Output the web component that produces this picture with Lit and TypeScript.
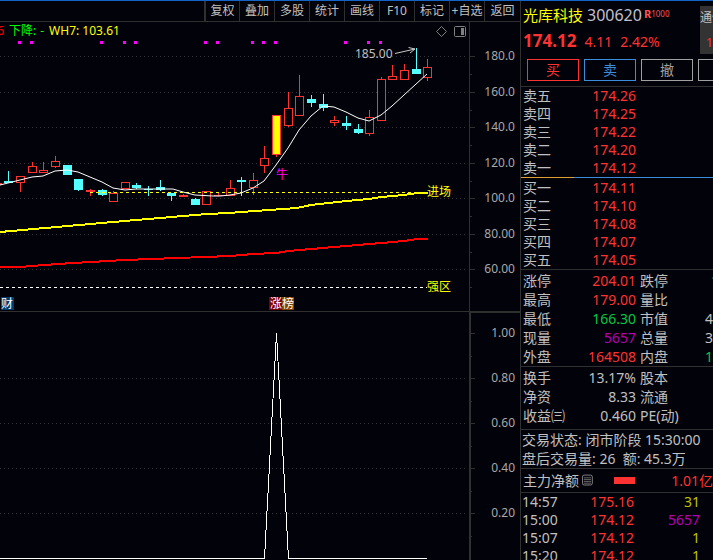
import { LitElement, html, svg, css } from "lit";
import { customElement } from "lit/decorators.js";

type Kind = "up" | "down" | "signal";
// centre x, high, body top, body bottom, low, kind
type Candle = [number, number, number, number, number, Kind];

const CANDLES: Candle[] = [
  [-3, 183, 183, 185, 185, "up"], [8, 171, 181, 183, 183, "down"], [20, 176, 176, 183, 192, "up"],
  [32, 162, 166, 173, 173, "up"], [43, 162, 170, 173, 173, "up"], [55, 156, 161, 167, 168, "up"],
  [67, 165, 165, 175, 175, "down"], [78, 179, 179, 190, 191, "down"], [90, 189, 190, 192, 196, "up"],
  [102, 189, 190, 195, 196, "down"], [113, 191, 193, 202, 202, "up"], [125, 182, 182, 189, 189, "up"],
  [136, 183, 185, 188, 189, "down"], [148, 186, 189, 190, 196, "down"], [160, 180, 187, 190, 191, "down"],
  [171, 193, 193, 196, 201, "down"], [183, 194, 195, 197, 197, "up"], [195, 198, 199, 205, 205, "down"],
  [206, 191, 191, 205, 205, "up"], [218, 192, 195, 196, 196, "up"], [230, 180, 188, 196, 196, "up"],
  [241, 177, 180, 182, 196, "down"], [253, 173, 180, 188, 195, "up"], [264, 146, 158, 166, 173, "up"],
  [276, 115, 115, 155, 157, "signal"], [288, 92, 108, 126, 127, "up"], [299, 75, 96, 116, 116, "up"],
  [311, 95, 99, 103, 107, "down"], [323, 94, 104, 108, 111, "down"], [334, 116, 120, 123, 126, "up"],
  [346, 116, 123, 126, 130, "down"], [358, 124, 129, 133, 134, "down"], [369, 110, 117, 134, 136, "up"],
  [381, 77, 79, 121, 121, "up"], [392, 65, 76, 80, 80, "up"], [404, 64, 70, 80, 80, "up"],
  [416, 48, 69, 74, 74, "down"], [427, 59, 67, 78, 81, "up"],
];

const MARKS = [18, 30, 100, 123, 134, 204, 216, 251, 262, 274, 344, 367, 379];

const MA_LINE =
  "0,185 8,183 20,180 32,177 43,176 55,171 67,170 78,172 90,177 102,182 113,188 125,190 136,189 173,189 183,192 195,195 213,196 220,196 230,195 241,193 253,188 264,181 276,165 288,148 299,130 311,116 323,106 334,107 346,112 358,118 369,121 381,115 392,106 404,95 427,74";
const TREND_LINE =
  "0,232 113,222 195,215 207,214 230,213 241,212 297,208 311,205 346,201 369,199 381,197 404,195 417,193 428,193";
const BASE_LINE =
  "0,267 20,267 57,264 125,260 230,256 253,254 276,253 288,251 334,247 381,243 404,241 417,239 428,239";

const PRICE_AXIS: [number, string][] = [
  [56, "180.0"], [92, "160.0"], [127, "140.0"], [163, "120.0"], [198, "100.0"], [234, "80.00"], [269, "60.00"],
];
const SIGNAL_AXIS: [number, string][] = [
  [333, "1.00"], [378, "0.80"], [423, "0.60"], [468, "0.40"], [513, "0.20"],
];

const TOOLS = ["复权", "叠加", "多股", "统计", "画线", "F10", "标记", "+自选", "返回"];

const ASKS = [["卖五", "174.26"], ["卖四", "174.25"], ["卖三", "174.22"], ["卖二", "174.20"], ["卖一", "174.12"]];
const BIDS = [["买一", "174.11"], ["买二", "174.10"], ["买三", "174.08"], ["买四", "174.07"], ["买五", "174.05"]];

// label, value, tone, second label, second value, second tone
const QUOTE = [
  ["涨停", "204.01", "red", "跌停", "1", "green peek"],
  ["最高", "179.00", "red", "量比", "", ""],
  ["最低", "166.30", "green", "市值", "4", ""],
  ["现量", "5657", "purple", "总量", "3", ""],
  ["外盘", "164508", "red", "内盘", "1", "green"],
];
const FINANCE = [
  ["换手", "13.17%", "", "股本", "", ""],
  ["净资", "8.33", "", "流通", "", ""],
  ["收益㈢", "0.460", "", "PE(动)", "", ""],
];
const DEALS = [
  ["14:57", "175.16", "31", "olive"],
  ["15:00", "174.12", "5657", "purple"],
  ["15:07", "174.12", "1", "olive"],
  ["15:20", "174.12", "1", "olive"],
];

const FONT = css`"Noto Sans", "Noto Sans CJK SC", sans-serif`;

@customElement("stock-chart")
class StockChart extends LitElement {
  static styles = css`
    :host { display: block; min-width: 0; font: 12px/18px ${FONT}; color: #c0c0c0; }
    .tools { display: flex; justify-content: flex-end; height: 20px; border-bottom: 1px solid #303030; }
    .tools button {
      width: 35px; padding: 0; border: 0; border-left: 1px solid #303030; background: none;
      color: inherit; font: inherit; white-space: nowrap;
    }
    .tools button:first-child { border-left-width: 2px; }
    .tools button:last-child { width: 36px; }
    .legend { display: flex; height: 17px; line-height: 17px; white-space: nowrap; overflow: hidden; }
    .values { flex: 1; display: flex; gap: 5px; overflow: hidden; }
    .first { width: 4px; display: flex; justify-content: flex-end; color: #ff0000; }
    .fall { display: flex; gap: 4px; color: #00ff00; }
    .wh { color: #ffff00; }
    .icons { width: 36px; flex: none; height: 17px; }
    .gutter { width: 50px; flex: none; border-left: 1px solid #303030; }
    svg { display: block; }
    .plot { width: 100%; height: auto; }
    .crisp { shape-rendering: crispEdges; }
    .grid { stroke: #34343a; stroke-dasharray: 1 3; }
    .frame { fill: #303030; }
    .up { fill: #02020a; stroke: #ff3232; }
    .down { fill: #54ffff; }
    .signal { fill: #ffff00; stroke: #ff3232; }
    .wick-up { fill: #ff3232; }
    .line { fill: none; }
    .white { stroke: #ffffff; }
    .yellow { stroke: #ffff00; }
    .strong-red { stroke: #ff0000; }
    .thick { stroke-width: 2; }
    .dash { stroke-dasharray: 3 3; }
    .mark { fill: #ff00ff; }
    text { fill: #c0c0c0; }
    .axis { text-anchor: end; fill: #a8a8a8; }
    .t-yellow { fill: #ffff00; }
    .t-magenta { fill: #ff00ff; }
    .t-white { fill: #ffffff; }
    .b-blue { fill: #003a6e; }
    .b-red { fill: #7c0000; }
    .b-brown { fill: #804000; }
    .glyph { fill: none; stroke: #808080; }
    .glyph-fill { fill: #808080; }
    .arrow { fill: none; stroke: #c8c8c8; }
  `;

  candle([x, high, top, bottom, low, kind]: Candle) {
    const wick = kind === "down" ? "down" : "wick-up";
    const body =
      kind === "down"
        ? svg`<rect class="down" x=${x - 4} y=${top} width="9" height=${bottom - top}></rect>`
        : bottom - top < 3
          ? svg`<rect class="wick-up" x=${x - 4} y=${top} width="9" height=${bottom - top}></rect>`
          : svg`<rect class=${kind} x=${x - 3.5} y=${top + 0.5} width="8" height=${bottom - top - 1}></rect>`;
    return svg`<rect class=${wick} x=${x} y=${high} width="1" height=${low - high}></rect>${body}`;
  }

  axis(ticks: [number, string][], step: number) {
    return ticks.map(
      ([y, label]) => svg`
        <rect class="frame" x="470" y=${y} width="5" height="1"></rect>
        <rect class="frame" x="470" y=${y + step} width="2" height="1"></rect>
        <text class="axis" x="515" y=${y + 4}>${label}</text>`
    );
  }

  gridline(y: number) {
    return svg`<line class="grid" x1="0" x2="468" y1=${y + 0.5} y2=${y + 0.5}></line>`;
  }

  render() {
    return html`
      <nav class="tools">${TOOLS.map((t) => html`<button>${t}</button>`)}</nav>
      <div class="legend">
        <div class="values">
          <span class="first">6</span><span class="fall"><span>下降:</span><span>-</span></span><span class="wh">WH7: 103.61</span>
        </div>
        <svg class="icons" viewBox="433 22 36 17">
          <path class="glyph" d="M441.5 26.5l5 5-5 5-5-5z"></path>
          <rect class="glyph" x="454.500" y="26.500" width="11" height="10" rx="1"></rect>
          <rect class="glyph-fill" x="461" y="28" width="3" height="7"></rect>
        </svg>
        <div class="gutter"></div>
      </div>
      <svg class="plot" viewBox="0 39 520 272">
        <g class="crisp">
          ${PRICE_AXIS.map(([y]) => this.gridline(y))}
          <rect class="frame" x="469" y="39" width="1" height="272"></rect>
          ${MARKS.map((x) => svg`<rect class="mark" x=${x} y="41" width="3" height="3"></rect>`)}
          ${CANDLES.map((c) => this.candle(c))}
          <line class="yellow dash" x1="90" x2="427" y1="192.5" y2="192.5"></line>
          <line class="white dash" x1="0" x2="427" y1="287.5" y2="287.5"></line>
          <polyline class="line yellow thick" points=${TREND_LINE}></polyline>
          <polyline class="line strong-red thick" points=${BASE_LINE}></polyline>
        </g>
        <polyline class="line white" points=${MA_LINE}></polyline>
        <path class="arrow" d="M395 53.500L415 49M408.500 47.500L415 49L410 53"></path>
        <text x="355" y="58">185.00</text>
        <text class="t-magenta" x="276" y="179">牛</text>
        <text class="t-yellow" x="427" y="196">进场</text>
        <text class="t-yellow" x="427" y="291">强区</text>
        <rect class="b-blue" x="1" y="297" width="13" height="13"></rect>
        <rect class="b-red" x="269" y="297" width="13" height="13"></rect>
        <rect class="b-brown" x="282" y="297" width="12" height="13"></rect>
        <text class="t-white" x="1" y="308">财</text>
        <text class="t-white" x="270" y="308">涨榜</text>
        ${this.axis(PRICE_AXIS, 18)}
      </svg>
      <svg class="plot" viewBox="0 311 520 249">
        <g class="crisp">
          <rect class="frame" x="0" y="311" width="520" height="1"></rect>
          <rect class="frame" x="470" y="311" width="50" height="2"></rect>
          <rect class="frame" x="469" y="311" width="2" height="249"></rect>
          ${SIGNAL_AXIS.slice(1).map(([y]) => this.gridline(y))}
          <polyline class="line white" points="0,558.5 264.5,558.5 276.5,333 288.5,558.5 427,558.5"></polyline>
        </g>
        ${this.axis(SIGNAL_AXIS, 23)}
      </svg>
    `;
  }
}

@customElement("quote-panel")
class QuotePanel extends LitElement {
  static styles = css`
    :host {
      display: block; min-width: 0; overflow: hidden; border-left: 1px solid #303030;
      font: 14px/18px ${FONT}; color: #c0c0c0; white-space: nowrap;
    }
    .head { display: flex; height: 54px; padding-left: 2px; }
    .title { flex: 1; min-width: 0; display: flex; flex-direction: column; padding-top: 4px; }
    .name { display: flex; align-items: baseline; gap: 4px; height: 24px; font-size: 15px; line-height: 20px; color: #ffff00; }
    .code { font-size: 16px; color: #c0c0d0; }
    .tag { display: flex; align-self: flex-start; margin-left: -2px; font-size: 8px; line-height: 18px; color: #ff5050; }
    .tag b { font-size: 11px; }
    .price { display: flex; align-items: baseline; gap: 8px; line-height: 24px; color: #ff3232; }
    .price b { font-size: 17px; }
    .sector {
      flex: none; width: 13px; height: 48px; margin-top: 5px; overflow: hidden; background: #333333;
      display: flex; flex-direction: column; justify-content: space-between; font-size: 12px; line-height: 23px;
    }
    .sector .red { padding-left: 6px; }
    .orders { display: flex; gap: 5px; padding: 4px 0 5px 6px; }
    .orders button {
      flex: none; width: 52px; height: 22px; padding: 0; border: 1px solid currentColor; background: none;
      color: #a0a0a0; font: inherit; line-height: 18px;
    }
    .orders .buy { color: #ff3232; }
    .orders .sell { color: #3c8cdc; }
    .block { border-top: 1px solid #303030; }
    .pad { padding-top: 1px; }
    .finance { padding-bottom: 4px; }
    table { width: 100%; table-layout: fixed; border-collapse: collapse; }
    th, td { height: 18px; padding: 0; font-weight: 400; text-align: right; line-height: 18px; }
    .tall th, .tall td { height: 19px; line-height: 19px; }
    th { width: 46px; padding-left: 2px; text-align: left; }
    td.value { width: 67px; }
    th.second { width: 42px; padding-left: 4px; }
    td.peek { text-align: left; padding-left: 29px; }
    td.price-at { width: 65px; }
    td.rest { width: auto; padding-right: 13px; }
    .split { height: 1px; background: linear-gradient(to right, #e0a030 53px, #3c8cdc 53px); }
    .status { padding-left: 1px; line-height: 19px; }
    .status div { white-space: pre; }
    .net { display: flex; align-items: center; height: 23px; padding-left: 2px; }
    .net svg { margin-left: 3px; }
    .bar { width: 24px; height: 7px; margin-left: 20px; background: #ff3232; }
    .amount { margin-left: 36px; color: #ff3232; }
    .red { color: #ff3232; }
    .green { color: #00c844; }
    .purple { color: #b400b4; }
    .olive { color: #c0c000; }
    .glyph { fill: none; stroke: #909090; }
    .rows { stroke: #707070; }
    .deals th { padding-left: 1px; width: 47px; }
  `;

  book(rows: string[][]) {
    return html`<table>
      ${rows.map(([k, v]) => html`<tr><th scope="row">${k}</th><td class="value red">${v}</td><td></td></tr>`)}
    </table>`;
  }

  pairs(rows: string[][]) {
    return html`<table class="tall">
      ${rows.map(
        ([k, v, tone, k2, v2, tone2]) => html`<tr>
          <th scope="row">${k}</th><td class="value ${tone}">${v}</td>
          <th class="second" scope="row">${k2}</th><td class=${tone2}>${v2}</td>
        </tr>`
      )}
    </table>`;
  }

  render() {
    return html`
      <header class="head">
        <div class="title">
          <div class="name">光库科技<span class="code">300620</span><span class="tag"><b>R</b><span>1000</span></span></div>
          <div class="price"><b>174.12</b><span>4.11</span><span>2.42%</span></div>
        </div>
        <div class="sector"><span>通信</span><span class="red">1</span></div>
      </header>
      <div class="orders">
        <button class="buy">买</button><button class="sell">卖</button><button>撤</button><button aria-label="更多"></button>
      </div>
      <section class="block">${this.book(ASKS)}</section>
      <div class="split"></div>
      <section class="pad">${this.book(BIDS)}</section>
      <section class="block pad">${this.pairs(QUOTE)}</section>
      <section class="block pad finance">${this.pairs(FINANCE)}</section>
      <section class="block status">
        <div>交易状态: 闭市阶段 15:30:00</div>
        <div>盘后交易量: 26  额: 45.3万</div>
      </section>
      <section class="block net">
        主力净额
        <svg width="13" height="13" viewBox="0 0 13 13">
          <rect class="glyph" x="0.500" y="0.500" width="11" height="11" rx="2"></rect>
          <path class="glyph rows" d="M2 3.500h8M2 5.500h8M2 7.500h8M2 9.500h8"></path>
        </svg>
        <span class="bar"></span><span class="amount">1.01亿</span>
      </section>
      <section class="block deals">
        <table>
          ${DEALS.map(
            ([t, p, n, tone]) => html`<tr><th scope="row">${t}</th><td class="price-at red">${p}</td><td class="rest ${tone}">${n}</td></tr>`
          )}
        </table>
      </section>
    `;
  }
}

@customElement("app-root")
class AppRoot extends LitElement {
  static styles = css`
    :host {
      display: grid; grid-template-columns: minmax(0, 1fr) 193px; box-sizing: border-box;
      height: 100vh; overflow: hidden; background: #02020a; border-top: 1px solid #1464c8;
    }
  `;
  render() {
    return html`<stock-chart></stock-chart><quote-panel></quote-panel>`;
  }
}
